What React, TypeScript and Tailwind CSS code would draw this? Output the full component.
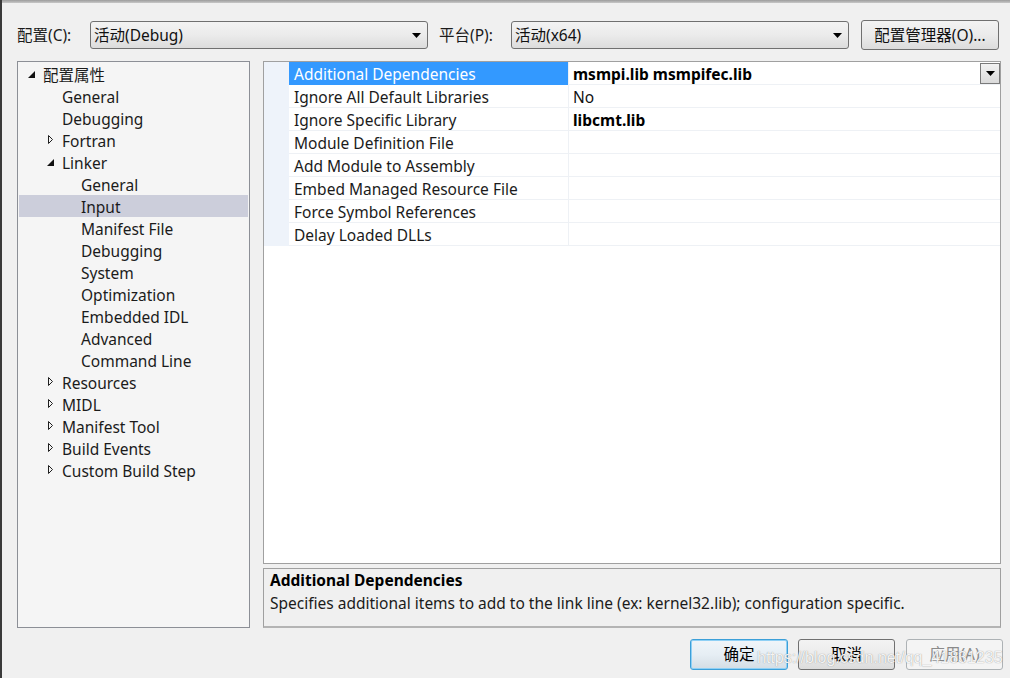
import React from "react"

type TreeNode = { label: string; level: 0 | 1 | 2; arrow?: "open" | "closed"; selected?: boolean }

const treeNodes: TreeNode[] = [
  { label: "配置属性", level: 0, arrow: "open" },
  { label: "General", level: 1 },
  { label: "Debugging", level: 1 },
  { label: "Fortran", level: 1, arrow: "closed" },
  { label: "Linker", level: 1, arrow: "open" },
  { label: "General", level: 2 },
  { label: "Input", level: 2, selected: true },
  { label: "Manifest File", level: 2 },
  { label: "Debugging", level: 2 },
  { label: "System", level: 2 },
  { label: "Optimization", level: 2 },
  { label: "Embedded IDL", level: 2 },
  { label: "Advanced", level: 2 },
  { label: "Command Line", level: 2 },
  { label: "Resources", level: 1, arrow: "closed" },
  { label: "MIDL", level: 1, arrow: "closed" },
  { label: "Manifest Tool", level: 1, arrow: "closed" },
  { label: "Build Events", level: 1, arrow: "closed" },
  { label: "Custom Build Step", level: 1, arrow: "closed" },
]

const indent: Record<number, string> = { 0: "pl-[9px]", 1: "pl-[28px]", 2: "pl-[47px]" }

type PropRow = { name: string; value?: string; bold?: boolean; selected?: boolean }

const propRows: PropRow[] = [
  { name: "Additional Dependencies", value: "msmpi.lib msmpifec.lib", bold: true, selected: true },
  { name: "Ignore All Default Libraries", value: "No" },
  { name: "Ignore Specific Library", value: "libcmt.lib", bold: true },
  { name: "Module Definition File" },
  { name: "Add Module to Assembly" },
  { name: "Embed Managed Resource File" },
  { name: "Force Symbol References" },
  { name: "Delay Loaded DLLs" },
]

const FONT = "font-['Noto_Sans','Noto_Sans_CJK_SC',sans-serif]"

function DownArrow() {
  return (
    <svg width="9" height="5" viewBox="0 0 9 5" className="shrink-0">
      <polygon points="0,0 9,0 4.5,5" fill="#000" />
    </svg>
  )
}

function TreeArrow({ kind }: { kind?: "open" | "closed" }) {
  if (kind === "open")
    return (
      <svg width="15" height="22" viewBox="0 0 15 22" className="shrink-0">
        <polygon points="7,8 7,15 0,15" fill="#111" />
      </svg>
    )
  if (kind === "closed")
    return (
      <svg width="15" height="22" viewBox="0 0 15 22" className="shrink-0">
        <polygon points="1.5,6.5 5.5,10.5 1.5,14.5" fill="none" stroke="#1e1e1e" strokeWidth="1" />
      </svg>
    )
  return <span className="w-[15px] shrink-0" />
}

function Combo({ text }: { text: string }) {
  return (
    <div className="w-[338px] h-[28px] flex items-center justify-between rounded-[3px] border border-[#707070] bg-linear-to-b from-[#f3f3f3] via-[#ebebeb] to-[#dcdcdc] pl-[3px] pr-[6px] text-[15.5px] text-[#111]">
      <span className="pt-[1px]">{text}</span>
      <DownArrow />
    </div>
  )
}

export default function App() {
  return (
    <div className={`${FONT} relative w-[1010px] h-[678px] overflow-hidden bg-[#f0f0f0] border-l-2 border-[#3a3a3a] text-[#1b1b1b] flex flex-col`}>
      <div className="h-[3px] bg-linear-to-b from-[#9c9c9c] to-[#c8c8c8] shrink-0" />

      {/* top row */}
      <div className="flex items-center h-[30px] mt-[17px] pl-[15px]">
        <span className="w-[73px] pt-[1px] text-[15.5px]">配置(C):</span>
        <Combo text="活动(Debug)" />
        <span className="ml-[11px] w-[72px] pt-[1px] text-[15.5px]">平台(P):</span>
        <Combo text="活动(x64)" />
        <div className="ml-[12px] w-[138px] h-[30px] flex items-center justify-center rounded-[3px] border border-[#707070] bg-linear-to-b from-[#f3f3f3] via-[#ebebeb] to-[#dcdcdc] pt-[1px] text-[15.5px] text-[#111]">
          配置管理器(O)...
        </div>
      </div>

      {/* main area */}
      <div className="flex mt-[11px] pl-[15px] h-[567px]">
        {/* tree */}
        <div className="w-[233px] border border-[#8c8f96] bg-[#f5f5f5] pt-[1px] px-[1px]">
          {treeNodes.map((n, i) => (
            <div
              key={i}
              className={`flex items-center h-[22px] text-[15.5px] ${indent[n.level]} ${n.selected ? "bg-[#cccedb]" : ""}`}
            >
              <TreeArrow kind={n.arrow} />
              <span className="pt-[2px] leading-[20px]">{n.label}</span>
            </div>
          ))}
        </div>

        {/* right column */}
        <div className="ml-[13px] w-[738px] flex flex-col">
          <div className="h-[503px] border border-[#a0a0a0] bg-white">
            {propRows.map((r, i) => (
              <div key={i} className="flex h-[23px] text-[15.5px] leading-[22px]">
                <div className="w-[25px] bg-[#eef3fa] shrink-0" />
                <div
                  className={`w-[279px] shrink-0 pl-[5px] pt-[1px] border-b ${r.selected ? "bg-[#3399ff] text-white border-[#3399ff]" : "border-[#eef1f5]"}`}
                >
                  {r.name}
                </div>
                <div className="w-[1px] bg-[#eef1f5] shrink-0" />
                <div className="flex-1 flex items-start justify-between pl-[4px] border-b border-[#eef1f5]">
                  <span className={`pt-[1px] ${r.bold ? "font-bold text-black" : "text-[#111]"}`}>{r.value}</span>
                  {r.selected && (
                    <div className="mt-[1px] w-[20px] h-[21px] flex items-center justify-center border border-[#7a7a7a] bg-linear-to-b from-[#f2f2f2] to-[#dadada]">
                      <DownArrow />
                    </div>
                  )}
                </div>
              </div>
            ))}
          </div>

          <div className="mt-[4px] h-[60px] border border-[#a0a0a0] border-b-2 border-b-[#b4b4b4] bg-[#f0f0f0] px-[6px] text-[15.5px] leading-[23px]">
            <div className="font-bold text-black">Additional Dependencies</div>
            <div>Specifies additional items to add to the link line (ex: kernel32.lib); configuration specific.</div>
          </div>
        </div>
      </div>

      {/* buttons */}
      <div className="flex justify-end mt-[11px] pr-[7px] gap-[10px]">
        <div className="w-[98px] h-[31px] flex items-center justify-center rounded-[3px] border border-[#3c9fd8] shadow-[inset_0_0_0_1px_#8fd0f5] bg-linear-to-b from-[#f0f5f9] via-[#e6eef4] to-[#d4dde4] text-[15.5px] text-black">
          确定
        </div>
        <div className="w-[97px] h-[31px] flex items-center justify-center rounded-[3px] border border-[#707070] bg-linear-to-b from-[#f3f3f3] via-[#ebebeb] to-[#dcdcdc] text-[15.5px] text-black">
          取消
        </div>
        <div className="ml-[1px] w-[97px] h-[31px] flex items-center justify-center rounded-[3px] border border-[#adb2b5] bg-[#f4f4f4] text-[15.5px] text-[#8a8a8a]">
          应用(A)
        </div>
      </div>

      {/* watermark */}
      <div className="absolute left-[755px] top-[648px] font-['Liberation_Sans',sans-serif] text-[16px] leading-[20px] text-white/90 [text-shadow:0_0_1px_rgba(80,80,80,0.7)] pointer-events-none">
        https://blog.csdn.net/qq_41831235
      </div>
    </div>
  )
}
